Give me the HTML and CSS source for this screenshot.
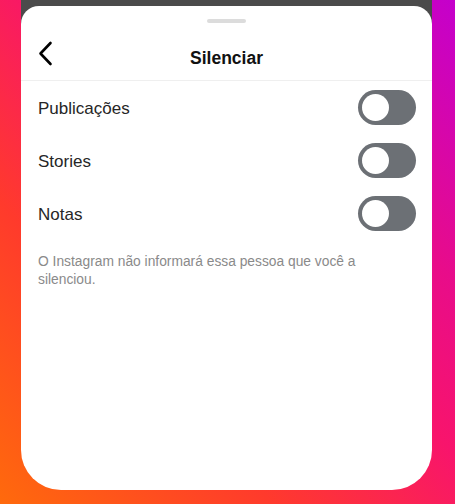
FILE: index.html
```html
<!DOCTYPE html>
<html lang="pt-BR">
<head>
<meta charset="utf-8">
<title>Silenciar</title>
<link rel="stylesheet" href="styles.css">
</head>
<body>
<div class="frame">
  <div class="sheet">
    <div class="handle"></div>
    <header class="header">
      <button class="back" aria-label="Voltar">
        <svg width="15" height="25" viewBox="0 0 15 25"><path d="M12.5 2 L2.5 12.5 L12.5 23" fill="none" stroke="#000" stroke-width="2.6" stroke-linecap="round" stroke-linejoin="round"/></svg>
      </button>
      <h1 class="title">Silenciar</h1>
    </header>
    <div class="rows">
      <div class="row"><span class="label">Publicações</span><span class="toggle"><span class="knob"></span></span></div>
      <div class="row"><span class="label">Stories</span><span class="toggle"><span class="knob"></span></span></div>
      <div class="row"><span class="label">Notas</span><span class="toggle"><span class="knob"></span></span></div>
    </div>
    <p class="note">O Instagram não informará essa pessoa que você a silenciou.</p>
  </div>
</div>
</body>
</html>
```
FILE: styles.css
```css
html, body {
  margin: 0;
  padding: 0;
}
body {
  width: 455px;
  height: 504px;
  overflow: hidden;
  background: linear-gradient(to top right, #ff6a0c 0%, #ff3a2c 30%, #f8146c 55%, #e80c8a 72%, #c400cc 100%);
  font-family: "Liberation Sans", Arial, sans-serif;
}
.frame {
  margin: 0 23px 0 21px;
  background: linear-gradient(#4b4b4b 0, #4b4b4b 40px, transparent 40px);
  padding-top: 6px;
}
.sheet {
  height: 484px;
  background: #fff;
  border-radius: 18px 18px 40px 40px;
  display: flex;
  flex-direction: column;
}
.handle {
  width: 39px;
  height: 4px;
  border-radius: 2px;
  background: #dcdcdc;
  margin: 13px auto 0;
}
.header {
  margin-top: 12px;
  height: 45px;
  border-bottom: 1px solid #efefef;
  display: flex;
  align-items: center;
  justify-content: center;
  position: relative;
}
.back {
  position: absolute;
  left: 17px;
  top: 6px;
  border: 0;
  background: none;
  padding: 0;
  width: 15px;
  height: 25px;
  display: flex;
}
.title {
  margin: 0;
  font-size: 17.5px;
  font-weight: 700;
  color: #111;
  padding-top: 1px;
}
.rows {
  display: flex;
  flex-direction: column;
}
.row {
  height: 53px;
  display: flex;
  align-items: center;
  justify-content: space-between;
  padding: 0 16px 0 17px;
}
.label {
  font-size: 17px;
  color: #262626;
  padding-top: 2px;
}
.toggle {
  width: 58px;
  height: 35px;
  border-radius: 18px;
  background: #6c7075;
  display: flex;
  align-items: center;
  padding-left: 4px;
  box-sizing: border-box;
}
.knob {
  width: 27px;
  height: 27px;
  border-radius: 50%;
  background: #fff;
}
.note {
  margin: 13px 0 0;
  padding: 0 50px 0 17px;
  font-size: 13.8px;
  line-height: 18px;
  color: #8a8a8a;
}
```
